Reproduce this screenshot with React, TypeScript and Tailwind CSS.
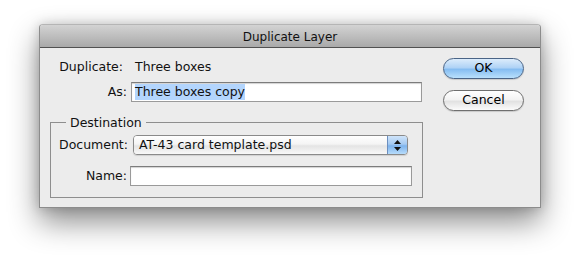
import React from 'react';

const font = { fontFamily: '"DejaVu Sans", "Liberation Sans", sans-serif' };

function TextField({ className = '', children }: { className?: string; children?: React.ReactNode }) {
  return (
    <div
      className={`flex h-[20px] items-center border border-[#9a9a9a] border-t-[#7c7c7c] bg-white pl-[3px] shadow-[inset_0_1px_1px_rgba(0,0,0,0.18)] ${className}`}
    >
      {children}
    </div>
  );
}

function PushButton({ label, primary }: { label: string; primary?: boolean }) {
  return (
    <button
      className={`flex h-[21px] w-[81px] items-center justify-center rounded-full border text-[12.5px] leading-none text-black ${
        primary
          ? 'border-[#4a6486] bg-[linear-gradient(to_bottom,#dcecfb_0%,#b0d3f6_45%,#86bdf1_55%,#b9e0fc_100%)]'
          : 'border-[#6f6f6f] bg-[linear-gradient(to_bottom,#ffffff_0%,#f3f3f3_45%,#e2e2e2_55%,#fbfbfb_100%)]'
      } shadow-[0_1px_1px_rgba(0,0,0,0.15)]`}
    >
      {label}
    </button>
  );
}

function PopUp({ value }: { value: string }) {
  return (
    <div className="flex h-[20px] w-[275px] overflow-hidden rounded-[4px] border border-[#8a8a8a] shadow-[0_1px_1px_rgba(0,0,0,0.12)]">
      <div className="flex flex-1 items-center bg-[linear-gradient(to_bottom,#ffffff_0%,#f4f4f4_45%,#e4e4e4_55%,#f8f8f8_100%)] pl-[5px]">
        {value}
      </div>
      <div className="flex w-[20px] flex-col items-center justify-center gap-[3px] border-l border-[#6c8fbf] bg-[linear-gradient(to_bottom,#cfe4fa_0%,#a5caf2_45%,#7db3ed_55%,#b7dcfb_100%)]">
        <svg width="7" height="4" viewBox="0 0 7 4">
          <path d="M3.5 0 L7 4 L0 4 Z" fill="#111" />
        </svg>
        <svg width="7" height="4" viewBox="0 0 7 4">
          <path d="M0 0 L7 0 L3.5 4 Z" fill="#111" />
        </svg>
      </div>
    </div>
  );
}

export default function App() {
  return (
    <div className="h-[262px] w-[580px] overflow-hidden bg-white pl-[39px] pt-[24px] text-[12.5px] text-[#111]" style={font}>
      <div className="flex h-[184px] w-[502px] flex-col overflow-hidden rounded-t-[4px] border border-[#8c8c8c] border-t-[#b5b5b5] bg-[#ececec] shadow-[0_14px_30px_rgba(0,0,0,0.45),0_0_12px_rgba(0,0,0,0.18)]">
        <div className="flex h-[23px] shrink-0 items-center justify-center border-b border-[#515151] bg-[linear-gradient(to_bottom,#d3d3d3,#a9a9a9)] pt-[1px] text-[12px] text-[#111]">
          Duplicate Layer
        </div>
        <div className="flex pt-[9px]">
          <div className="flex w-[383px] flex-col">
            <div className="flex h-[20px] items-center">
              <span className="w-[83px] text-right">Duplicate:</span>
              <span className="ml-[12px]">Three boxes</span>
            </div>
            <div className="mt-[5px] flex h-[20px] items-center">
              <span className="w-[87px] text-right">As:</span>
              <TextField className="ml-[4px] w-[291px]">
                <span className="bg-[#b3d5fd] leading-[16px]">Three boxes copy</span>
              </TextField>
            </div>
            <fieldset className="ml-[10px] mt-[13px] h-[83px] w-[373px] border border-[#8e8e8e]">
              <legend className="ml-[15px] px-[4px] leading-[15px]">Destination</legend>
              <div className="mt-[5px] flex items-center">
                <span className="w-[77px] text-right">Document:</span>
                <div className="ml-[5px]">
                  <PopUp value="AT-43 card template.psd" />
                </div>
              </div>
              <div className="mt-[11px] flex items-center">
                <span className="w-[76px] text-right">Name:</span>
                <TextField className="ml-[3px] w-[282px]" />
              </div>
            </fieldset>
          </div>
          <div className="ml-[20px] flex flex-col gap-[11px] pt-[1px]">
            <PushButton label="OK" primary />
            <PushButton label="Cancel" />
          </div>
        </div>
      </div>
    </div>
  );
}
